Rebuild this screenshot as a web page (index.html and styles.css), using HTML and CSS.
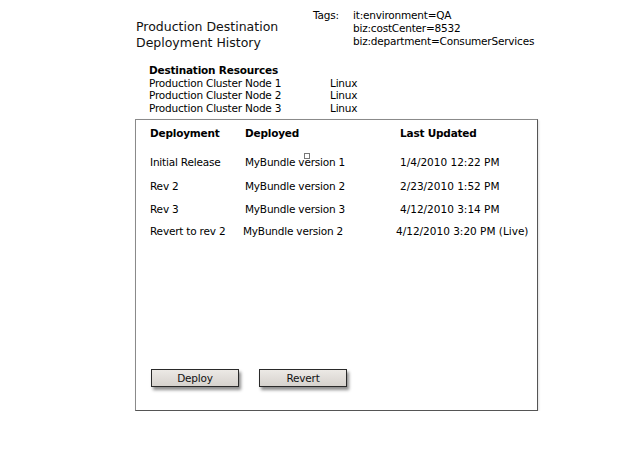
FILE: index.html
```html
<!DOCTYPE html>
<html lang="en">
<head>
    <meta charset="UTF-8">
    <title>Production Destination Deployment History</title>
    <link rel="stylesheet" href="styles.css">
</head>
<body>
    <div class="page">
        <div class="page-header">
            <h1 class="page-title">Production Destination<br>Deployment History</h1>
            <div class="tags">
                <span class="tags-label">Tags:</span>
                <ul class="tag-list">
                    <li>it:environment=QA</li>
                    <li>biz:costCenter=8532</li>
                    <li>biz:department=ConsumerServices</li>
                </ul>
            </div>
        </div>

        <div class="resources">
            <div class="resources-title">Destination Resources</div>
            <div class="resource-row"><span class="resource-name">Production Cluster Node 1</span><span>Linux</span></div>
            <div class="resource-row"><span class="resource-name">Production Cluster Node 2</span><span>Linux</span></div>
            <div class="resource-row"><span class="resource-name">Production Cluster Node 3</span><span>Linux</span></div>
        </div>

        <div class="history-box">
            <div class="history-table">
                <div class="history-row head">
                    <span class="col-name">Deployment</span>
                    <span class="col-bundle">Deployed</span>
                    <span class="col-date">Last Updated</span>
                </div>
                <div class="history-row">
                    <span class="col-name">Initial Release</span>
                    <span class="col-bundle">MyBundle v<span class="cursor-mark"></span>ersion 1</span>
                    <span class="col-date">1/4/2010 12:22 PM</span>
                </div>
                <div class="history-row">
                    <span class="col-name">Rev 2</span>
                    <span class="col-bundle">MyBundle version 2</span>
                    <span class="col-date">2/23/2010 1:52 PM</span>
                </div>
                <div class="history-row">
                    <span class="col-name">Rev 3</span>
                    <span class="col-bundle">MyBundle version 3</span>
                    <span class="col-date">4/12/2010 3:14 PM</span>
                </div>
                <div class="history-row live">
                    <span class="col-name">Revert to rev 2</span>
                    <span class="col-bundle">MyBundle version 2</span>
                    <span class="col-date">4/12/2010 3:20 PM (Live)</span>
                </div>
            </div>

            <div class="history-actions">
                <button class="action-button">Deploy</button>
                <button class="action-button">Revert</button>
            </div>
        </div>
    </div>
</body>
</html>
```

FILE: styles.css
```css
* {
    margin: 0;
    padding: 0;
    box-sizing: border-box;
}

body {
    background-color: #ffffff;
    color: #000000;
    font-family: 'DejaVu Sans', 'Verdana', sans-serif;
    font-size: 10.5px;
    letter-spacing: -0.2px;
}

.page {
    padding-left: 135px;
    width: 630px;
}

.page-header {
    display: flex;
    align-items: flex-start;
}

.page-title {
    width: 178px;
    margin-top: 19px;
    padding-left: 1px;
    font-size: 12.5px;
    font-weight: normal;
    line-height: 16px;
    letter-spacing: 0;
    color: #111;
}

.tags {
    display: flex;
    padding-top: 9px;
    line-height: 13px;
}

.tags-label {
    width: 40px;
}

.tag-list {
    list-style: none;
}

.resources {
    margin-top: 13px;
    padding-left: 14px;
    line-height: 12.7px;
}

.resources-title {
    font-weight: bold;
}

.resource-row {
    display: flex;
}

.resource-name {
    width: 181px;
}

.history-box {
    margin-top: 4px;
    width: 403px;
    height: 292px;
    border: 1px solid #8a8a8a;
    border-right-color: #555;
    border-bottom-color: #555;
    box-shadow: 1px 1px 2px rgba(0, 0, 0, 0.12);
    padding: 6px 0 0 14px;
}

.history-table {
    display: flex;
    flex-direction: column;
}

.history-row {
    display: flex;
    height: 24px;
    align-items: center;
}

.history-row.head {
    font-weight: bold;
    height: 14px;
    margin-bottom: 10px;
}

.history-row:nth-child(2) { height: 25px; }
.history-row:nth-child(3) { height: 23px; }
.history-row:nth-child(4) { height: 22px; }
.history-row:nth-child(5) { height: 22px; }

.col-name {
    width: 95px;
}

.col-bundle {
    width: 155px;
    position: relative;
}

.col-date {
    letter-spacing: 0;
}

.head .col-date {
    letter-spacing: -0.2px;
}

.live .col-bundle,
.live .col-date {
    margin-left: -2px;
}

.cursor-mark {
    position: absolute;
    left: 59px;
    top: -3px;
    width: 6px;
    height: 6px;
    border: 1px solid #777;
    background: #fff;
}

.history-actions {
    display: flex;
    gap: 20px;
    margin-top: 127px;
    padding-left: 1px;
}

.action-button {
    width: 88px;
    height: 18px;
    border: 1px solid #2a2a2a;
    background: linear-gradient(#ece9e5, #d6d2cd);
    box-shadow: 2px 3px 3px rgba(0, 0, 0, 0.45);
    font-family: 'DejaVu Sans', 'Verdana', sans-serif;
    font-size: 10.5px;
    letter-spacing: -0.2px;
    color: #111;
    cursor: pointer;
}
```
